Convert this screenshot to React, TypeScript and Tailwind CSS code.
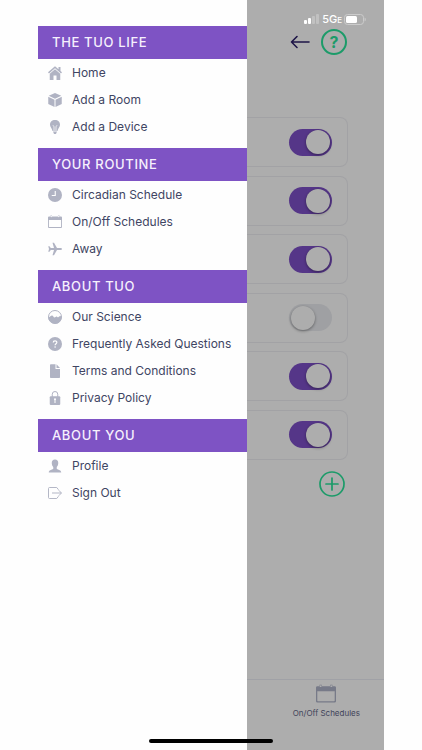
import type { ReactNode } from "react";

function Icon({ children, size = "size-[14px]" }: { children: ReactNode; size?: string }) {
  return (
    <svg viewBox="0 0 28 28" className={`${size} shrink-0`} fill="currentColor" aria-hidden="true">
      {children}
    </svg>
  );
}

const HomeIcon = () => (
  <Icon>
    <path d="M14 .500 0 12.500l2 2.400L14 4.700l12 10.200 2-2.400-3-2.600V2h-4v4.500z" />
    <path d="M14 6.500 3.500 15.500V28H11v-9h6v9h7.500V15.500z" />
  </Icon>
);

const RoomIcon = () => (
  <Icon>
    <path d="M14 0 26.500 5.500 14 11.500 1.500 5.500z" />
    <path d="M0.500 7.500 13 13.500V28L0.500 22z" />
    <path d="M27.500 7.500 15 13.500V28l12.500-6z" />
  </Icon>
);

const BulbIcon = () => (
  <Icon>
    <path d="M14 0c6 0 10 4 10 9.500 0 4.500-3.500 6.500-5 12.500H9C7.500 16 4 14 4 9.500 4 4 8 0 14 0z" />
    <path d="M10 10.500l2 3v10M18 10.500l-2 3v10" fill="none" stroke="#fff" strokeWidth="1.500" />
    <path d="M10 23h8l-2 5h-4z" />
  </Icon>
);

const ClockIcon = () => (
  <Icon>
    <circle cx="14" cy="14" r="14" />
    <path d="M14.500 6v9H7.500" fill="none" stroke="#fff" strokeWidth="2.200" />
  </Icon>
);

const CalendarIcon = ({ size, hole }: { size?: string; hole?: string }) => (
  <Icon size={size}>
    <path
      fillRule="evenodd"
      d="M2 3h3V1h3v2h12V1h3v2h3a2 2 0 0 1 2 2v19a2 2 0 0 1-2 2H2a2 2 0 0 1-2-2V5a2 2 0 0 1 2-2zm-.2 7v13.200a1 1 0 0 0 1 1h22.400a1 1 0 0 0 1-1V10z"
    />
    <circle cx="6.500" cy="3" r="1.300" fill={hole ?? "#fff"} />
    <circle cx="21.500" cy="3" r="1.300" fill={hole ?? "#fff"} />
  </Icon>
);

const PlaneIcon = () => (
  <Icon>
    <path d="M28 14c0 1.200-1.500 2-3.500 2H18l-6 10.500H9L12 16H5.500L3 19.500H.500L2 14 .500 8.500H3L5.500 12H12L9 1.500h3L18 12h6.500c2 0 3.500.800 3.500 2z" />
  </Icon>
);

const ScienceIcon = () => (
  <Icon>
    <circle cx="14" cy="14" r="13" fill="none" stroke="currentColor" strokeWidth="2" />
    <path d="M0.500 15c4-1 5-4 7.500-4s3 4 5 4 2.500-2 4-2 2 2 3.500 1.500S23 10 27.500 13A13.500 13.500 0 0 1 .500 15z" />
  </Icon>
);

const QuestionIcon = () => (
  <Icon>
    <circle cx="14" cy="14" r="14" />
    <path d="M10.500 11c0-4.500 7.200-4.500 7.200-.300 0 2.600-3.500 2.800-3.500 5.800" fill="none" stroke="#fff" strokeWidth="2.400" />
    <circle cx="14.200" cy="20" r="1.600" fill="#fff" />
  </Icon>
);

const DocumentIcon = () => (
  <Icon>
    <path d="M4 2a1.500 1.500 0 0 1 1.500-1.500H15V10h9v16.500a1.500 1.500 0 0 1-1.500 1.500h-17A1.500 1.500 0 0 1 4 26.500z" />
    <path d="M17 .500 24 8h-7z" />
  </Icon>
);

const LockIcon = () => (
  <Icon>
    <path d="M8.500 12V6.500a5.500 5.500 0 0 1 11 0V12" fill="none" stroke="currentColor" strokeWidth="2" />
    <rect x="3.500" y="10.500" width="21" height="17.500" rx="2" />
    <path d="M14 17v7" stroke="#fff" strokeWidth="2" />
    <circle cx="14" cy="16.500" r="2" fill="#fff" />
  </Icon>
);

const ProfileIcon = () => (
  <Icon>
    <path d="M14 1c4.300 0 6.500 2.800 6.500 7 0 3.800-1.500 6.500-3 8v3.500c0 2 9 1.500 9 7.500h-25c0-6 9-5.500 9-7.500V16c-1.500-1.500-3-4.200-3-8 0-4.200 2.200-7 6.500-7z" />
  </Icon>
);

const SignOutIcon = () => (
  <Icon>
    <g fill="none" stroke="currentColor" strokeWidth="1.900">
      <path d="M21 7.500 17.500 3H3a2 2 0 0 0-2 2v18a2 2 0 0 0 2 2h14.500l3.500-4.500" />
      <path d="M8 14h18.500M21.500 8.500l5.500 5.500-5.500 5.500" />
    </g>
  </Icon>
);

const sections = [
  {
    title: "THE TUO LIFE",
    items: [
      { label: "Home", icon: <HomeIcon /> },
      { label: "Add a Room", icon: <RoomIcon /> },
      { label: "Add a Device", icon: <BulbIcon /> },
    ],
  },
  {
    title: "YOUR ROUTINE",
    items: [
      { label: "Circadian Schedule", icon: <ClockIcon /> },
      { label: "On/Off Schedules", icon: <CalendarIcon /> },
      { label: "Away", icon: <PlaneIcon /> },
    ],
  },
  {
    title: "ABOUT TUO",
    items: [
      { label: "Our Science", icon: <ScienceIcon /> },
      { label: "Frequently Asked Questions", icon: <QuestionIcon /> },
      { label: "Terms and Conditions", icon: <DocumentIcon /> },
      { label: "Privacy Policy", icon: <LockIcon /> },
    ],
  },
  {
    title: "ABOUT YOU",
    items: [
      { label: "Profile", icon: <ProfileIcon /> },
      { label: "Sign Out", icon: <SignOutIcon /> },
    ],
  },
];

function Drawer() {
  return (
    <nav className="w-[209px] shrink-0 bg-[#fefefe] pt-[26px]">
      {sections.map((section) => (
        <section key={section.title} className="pb-2">
          <h2 className="flex h-[33px] items-center bg-[#7e53c4] px-[14px] text-[13px] font-medium tracking-wider text-[#f6f0fd]">
            {section.title}
          </h2>
          <ul>
            {section.items.map((item) => (
              <li key={item.label}>
                <a href="#" className="flex h-[27px] items-center gap-[10px] pl-[10px] text-[12px] whitespace-nowrap text-[#3f4563]">
                  <span className="text-[#b0b3c3]">{item.icon}</span>
                  {item.label}
                </a>
              </li>
            ))}
          </ul>
        </section>
      ))}
    </nav>
  );
}

function StatusBar() {
  return (
    <div className="flex h-[14px] items-center justify-end gap-[2px] pr-[18px] text-white">
      <svg viewBox="0 0 16 10" className="h-[10px] w-4" fill="currentColor" aria-hidden="true">
        <rect x="0" y="6" width="3" height="4" rx="1" />
        <rect x="4" y="4" width="3" height="6" rx="1" />
        <rect x="8" y="2" width="3" height="8" rx="1" opacity="0.250" />
        <rect x="12" y="0" width="3" height="10" rx="1" opacity="0.250" />
      </svg>
      <span className="flex items-baseline text-[11px] leading-none font-medium">
        5G<span className="text-[8px]">E</span>
      </span>
      <svg viewBox="0 0 22 11" className="h-[11px] w-[22px]" aria-hidden="true">
        <rect x="0.500" y="0.500" width="19" height="10" rx="3" fill="none" stroke="#cbcbcb" />
        <rect x="2" y="2" width="11" height="7" rx="1.500" fill="#fff" />
        <path d="M20.700 3.500v4c1.200-.500 1.200-3.500 0-4z" fill="#d6d6d6" />
      </svg>
    </div>
  );
}

const schedules = [true, true, true, false, true, true];

function SchedulePage() {
  return (
    <main className="flex min-w-0 flex-1 flex-col bg-[#adadad] pt-3">
      <StatusBar />
      <header className="flex items-center justify-end gap-[11px] pt-[3px] pr-[37px]">
        <button type="button" aria-label="Back" className="text-[#1e1547]">
          <svg viewBox="0 0 20 14" className="h-[14px] w-5" fill="none" stroke="currentColor" strokeWidth="1.600" strokeLinecap="round" strokeLinejoin="round" aria-hidden="true">
            <path d="M19 7H1.500M7 1.500 1.500 7 7 12.500" />
          </svg>
        </button>
        <button
          type="button"
          aria-label="Help"
          className="flex size-[26px] items-center justify-center rounded-full border-2 border-[#1c9b69] text-[16px] leading-none font-bold text-[#1c9b69]"
        >
          ?
        </button>
      </header>
      <ul className="mt-[62px] mr-9 flex h-[343px] flex-col justify-between">
        {schedules.map((on, i) => (
          <li key={i} className="flex h-[50px] items-center justify-end rounded-r-[8px] border-y border-r border-[#a2a2a5] pr-[15px]">
            <input
              type="checkbox"
              role="switch"
              defaultChecked={on}
              aria-label={`Schedule ${i + 1}`}
              className="flex h-[27px] w-[43px] appearance-none items-center rounded-full bg-[#9fa0a3] px-0.5 before:size-6 before:rounded-full before:bg-[#adadad] before:shadow-[0_1px_3px_rgba(0,0,0,0.4)] checked:justify-end checked:bg-[#553688]"
            />
          </li>
        ))}
      </ul>
      <div className="flex justify-end pt-[11px] pr-[39px]">
        <button type="button" aria-label="Add schedule" className="text-[#1c9b69]">
          <svg viewBox="0 0 26 26" className="size-[26px]" fill="none" stroke="currentColor" strokeWidth="1.700" strokeLinecap="round" aria-hidden="true">
            <circle cx="13" cy="13" r="12" />
            <path d="M13 7v12M7 13h12" />
          </svg>
        </button>
      </div>
      <footer className="mt-auto flex h-[71px] justify-end border-t border-[#a0a1a6] pt-1 pr-6">
        <a href="#" className="flex flex-col items-center gap-1 text-[8px] leading-[10px] whitespace-nowrap text-[#41445a]">
          <span className="text-[#777a88]">
            <CalendarIcon size="size-5" hole="#adadad" />
          </span>
          On/Off Schedules
        </a>
      </footer>
    </main>
  );
}

export default function App() {
  return (
    <div className="relative flex min-h-screen bg-[#fefefe] px-[38px] font-['Inter',sans-serif]">
      <Drawer />
      <SchedulePage />
      <div className="absolute inset-x-0 bottom-[7px] flex justify-center">
        <div className="h-1 w-[124px] rounded-full bg-black" />
      </div>
    </div>
  );
}
